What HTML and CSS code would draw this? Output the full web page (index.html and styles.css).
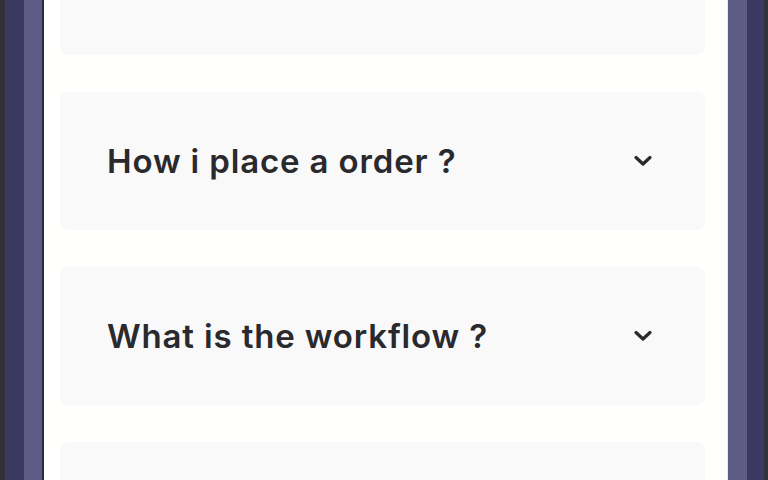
FILE: index.html
```html
<!DOCTYPE html>
<html>
<head>
<meta charset="utf-8">
<link rel="stylesheet" href="styles.css">
</head>
<body>
<div class="device">
  <div class="bezel bezel-left">
    <div class="edge edge-dark"></div>
    <div class="edge edge-navy"></div>
    <div class="edge edge-light"></div>
    <div class="edge edge-line"></div>
  </div>
  <main class="screen">
    <div class="faq-list">
      <div class="faq-item"></div>
      <div class="faq-item">
        <span class="faq-q">How i place a order ?</span>
        <svg class="chev" width="20" height="12" viewBox="0 0 20 12"><path d="M3 2.5 L10 9 L17 2.5" fill="none" stroke="#2a2a2e" stroke-width="3.2" stroke-linecap="round" stroke-linejoin="round"/></svg>
      </div>
      <div class="faq-item">
        <span class="faq-q">What is the workflow ?</span>
        <svg class="chev" width="20" height="12" viewBox="0 0 20 12"><path d="M3 2.5 L10 9 L17 2.5" fill="none" stroke="#2a2a2e" stroke-width="3.2" stroke-linecap="round" stroke-linejoin="round"/></svg>
      </div>
      <div class="faq-item"></div>
    </div>
  </main>
  <div class="bezel bezel-right">
    <div class="edge edge-yellow"></div>
    <div class="edge edge-light r"></div>
    <div class="edge edge-navy r"></div>
    <div class="edge edge-dark r"></div>
  </div>
</div>
</body>
</html>
```
FILE: styles.css
```css
html, body {
  margin: 0;
  padding: 0;
  width: 768px;
  height: 480px;
  overflow: hidden;
  background: #3b3862;
}
.device {
  display: flex;
  width: 768px;
  height: 480px;
}
.bezel {
  display: flex;
  height: 100%;
}
.edge { height: 100%; }
.edge-dark { width: 5px; background: #303036; }
.edge-navy { width: 19px; background: #3b3862; }
.edge-light { width: 18px; background: #5e5b84; }
.edge-line { width: 2px; background: #2b2944; }
.edge-yellow { width: 1px; background: #f3eeb0; }
.edge-light.r { width: 19px; }
.edge-navy.r { width: 17px; }
.edge-dark.r { width: 4px; background: #34333c; }
.screen {
  flex: 1;
  background: #fffffd;
  padding: 0 22px 0 16px;
  overflow: hidden;
}
.faq-list {
  display: flex;
  flex-direction: column;
  gap: 37px;
  margin-top: -83px;
}
.faq-item {
  height: 138px;
  flex: none;
  background: #f9f9f9;
  border-radius: 8px;
  display: flex;
  align-items: center;
  justify-content: space-between;
  padding: 0 52px 0 47px;
}
.faq-q {
  font-family: Inter, "Open Sans", sans-serif;
  font-weight: 600;
  font-size: 33px;
  letter-spacing: 0.85px;
  color: #2a2a2e;
}
.chev { display: block; }
```
